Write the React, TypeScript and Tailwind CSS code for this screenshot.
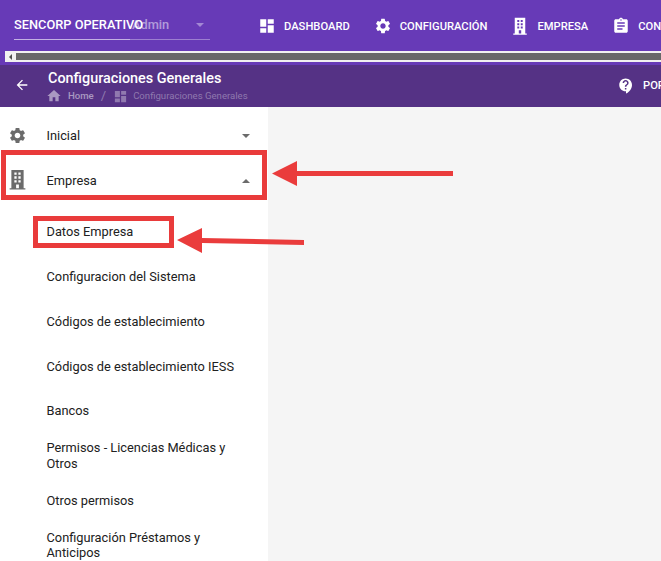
import type { ReactNode } from "react";

const paths = {
  dashboard: "M3 13h8V3H3v10zm0 8h8v-6H3v6zm10 0h8V11h-8v10zm0-18v6h8V3h-8z",
  settings:
    "M19.14 12.94c.04-.3.06-.61.06-.94 0-.32-.02-.64-.07-.94l2.03-1.58a.49.49 0 0 0 .12-.61l-1.92-3.32a.488.488 0 0 0-.59-.22l-2.39.96c-.5-.38-1.03-.7-1.62-.94l-.36-2.54a.484.484 0 0 0-.48-.41h-3.84c-.24 0-.43.17-.47.41l-.36 2.54c-.59.24-1.13.57-1.62.94l-2.39-.96c-.22-.08-.47 0-.59.22L2.74 8.87c-.12.21-.08.47.12.61l2.03 1.58c-.05.3-.09.63-.09.94s.02.64.07.94l-2.03 1.58a.49.49 0 0 0-.12.61l1.92 3.32c.12.22.37.29.59.22l2.39-.96c.5.38 1.03.7 1.62.94l.36 2.54c.05.24.24.41.48.41h3.84c.24 0 .44-.17.47-.41l.36-2.54c.59-.24 1.13-.56 1.62-.94l2.39.96c.22.08.47 0 .59-.22l1.92-3.32c.12-.22.07-.47-.12-.61l-2.01-1.58zM12 15.6c-1.98 0-3.6-1.62-3.6-3.6s1.62-3.6 3.6-3.6 3.6 1.62 3.6 3.6-1.62 3.6-3.6 3.6z",
  // body with base line, two columns of windows and a door
  building:
    "M5 1h14v21h2v1.5H3V22h2V1zM8.4 4v2.6h2.6V4H8.4zm4.6 0v2.6h2.6V4H13zM8.4 8.4V11h2.6V8.4H8.4zm4.6 0V11h2.6V8.4H13zM8.4 12.8v2.6h2.6v-2.6H8.4zm4.6 0v2.6h2.6v-2.6H13zM10.4 17.6V22h3.2v-4.4h-3.2z",
  assignment:
    "M19 3h-4.18C14.4 1.84 13.3 1 12 1c-1.3 0-2.4.84-2.82 2H5c-1.1 0-2 .9-2 2v14c0 1.1.9 2 2 2h14c1.1 0 2-.9 2-2V5c0-1.1-.9-2-2-2zm-7 0c.55 0 1 .45 1 1s-.45 1-1 1-1-.45-1-1 .45-1 1-1zm2 14H7v-2h7v2zm3-4H7v-2h10v2zm0-4H7V7h10v2z",
  home: "M10 20v-6h4v6h5v-8h3L12 3 2 12h3v8z",
  help: "M11.5 2C6.81 2 3 5.81 3 10.5S6.81 19 11.5 19h.5v3c4.86-2.34 8-7 8-11.5C20 5.81 16.19 2 11.5 2zm1 14.5h-2v-2h2v2zm0-3.5h-2c0-3.25 3-3 3-5 0-1.1-.9-2-2-2s-2 .9-2 2h-2c0-2.21 1.79-4 4-4s4 1.79 4 4c0 2.5-3 2.75-3 5z",
  back: "M20 11H7.83l5.59-5.59L12 4l-8 8 8 8 1.41-1.41L7.83 13H20v-2z",
};

const Icon = ({ d, className }: { d: string; className: string }) => (
  <svg viewBox="0 0 24 24" fill="currentColor" fillRule="evenodd" className={className}>
    <path d={d} />
  </svg>
);

const NavItem = ({ icon, label }: { icon: string; label: string }) => (
  <div className="flex items-center shrink-0 gap-[8px] mr-[24px]">
    <Icon d={icon} className="w-[18px] h-[18px] text-white shrink-0" />
    <span className="mt-[2px] text-[11.2px] font-medium text-white whitespace-nowrap">{label}</span>
  </div>
);

const SubItem = ({ children, className = "h-[45px] leading-[16px]" }: { children: ReactNode; className?: string }) => (
  <div className={`flex items-center pl-[46.5px] pr-[30px] text-[12.8px] text-[#212121] ${className}`}>
    <span>{children}</span>
  </div>
);

export default function App() {
  return (
    <div className="relative w-[661px] h-[561px] overflow-hidden bg-[#f5f5f5] font-['Roboto',sans-serif]">
      {/* top bar */}
      <div className="h-[65px] bg-[#673ab7]">
        <div className="flex items-center h-[51px] pl-[14px] pt-[1px]">
          <div className="relative self-start w-[196px] h-[39px] mr-[48px] shrink-0 border-b border-white/35">
            <span className="absolute left-0 top-[16px] text-[12.8px] leading-[16px] font-medium text-white whitespace-nowrap">
              SENCORP OPERATIVO
            </span>
            <span className="absolute left-[118px] top-[16px] text-[12.8px] leading-[16px] font-medium text-white/50">
              Admin
            </span>
            <span className="absolute right-[6px] top-[22px] border-x-[4px] border-t-[4px] border-x-transparent border-t-white/40" />
            <div className="absolute left-0 -bottom-px w-[116px] h-px bg-white/40" />
          </div>
          <NavItem icon={paths.dashboard} label="DASHBOARD" />
          <NavItem icon={paths.settings} label="CONFIGURACIÓN" />
          <NavItem icon={paths.building} label="EMPRESA" />
          <NavItem icon={paths.assignment} label="CONTRATOS" />
        </div>
        {/* horizontal scrollbar */}
        <div className="flex h-[11px] ml-[5px] border-y-2 border-[#f1f1f1]">
          <div className="w-[11px] bg-[#f1f1f1] flex items-center justify-center">
            <span className="border-y-[3px] border-r-[3px] border-y-transparent border-r-[#505050]" />
          </div>
          <div className="flex-1 bg-[#686868]" />
        </div>
      </div>

      {/* page title */}
      <div className="flex items-center h-[42px] bg-[#553285] overflow-hidden">
        <Icon d={paths.back} className="w-[16px] h-[16px] -mt-[2px] ml-[14px] text-white shrink-0" />
        <div className="ml-[18px] flex-1 self-start pt-[6px]">
          <div className="text-[14.4px] leading-[16px] font-medium text-white">Configuraciones Generales</div>
          <div className="flex items-center mt-[1px] text-[9.6px] leading-[12px] text-white/35">
            <Icon d={paths.home} className="w-[16px] h-[16px] -ml-[2px] mr-[6px] text-white/50" />
            <span className="font-medium text-white/50">Home</span>
            <span className="mx-[7px] text-[13px]">/</span>
            <Icon d={paths.dashboard} className="w-[15px] h-[15px] mr-[5px]" />
            <span>Configuraciones Generales</span>
          </div>
        </div>
        <div className="flex items-center shrink-0 gap-[8px] w-[44px]">
          <Icon d={paths.help} className="w-[18px] h-[18px] text-white shrink-0" />
          <span className="text-[11.2px] font-medium text-white">PORTAL</span>
        </div>
      </div>

      {/* sidebar */}
      <div className="w-[268px] h-[454px] bg-white pt-[6px] overflow-hidden">
        <div className="relative flex items-center h-[45px] pl-[46.5px] pr-[18px] text-[12.8px] text-[#212121]">
          <Icon d={paths.settings} className="absolute left-[7.5px] top-[12.5px] w-[19px] h-[19px] text-[#6b6b6b]" />
          <span className="flex-1">Inicial</span>
          <span className="border-x-[4px] border-t-[4px] border-x-transparent border-t-[#6b6b6b]" />
        </div>
        <div className="relative flex items-center h-[45px] pl-[46.5px] pr-[18px] text-[12.8px] text-[#212121]">
          <Icon d={paths.building} className="absolute left-[6.5px] top-[11px] w-[21px] h-[21px] text-[#6b6b6b]" />
          <span className="flex-1">Empresa</span>
          <span className="border-x-[4px] border-b-[4px] border-x-transparent border-b-[#6b6b6b]" />
        </div>
        <div className="h-[6px]" />
        <SubItem>Datos Empresa</SubItem>
        <SubItem>Configuracion del Sistema</SubItem>
        <SubItem>Códigos de establecimiento</SubItem>
        <SubItem>Códigos de establecimiento IESS</SubItem>
        <SubItem className="h-[43px] leading-[16px]">Bancos</SubItem>
        <SubItem className="h-[46px] pt-[1px] leading-[16px]">Permisos - Licencias Médicas y Otros</SubItem>
        <SubItem>Otros permisos</SubItem>
        <SubItem className="h-[44px] leading-[15px]">Configuración Préstamos y Anticipos</SubItem>
      </div>

      {/* annotations */}
      <div className="absolute left-[1px] top-[150px] w-[266px] h-[50px] border-[5px] border-[#e93b3b]" />
      <div className="absolute left-[33px] top-[216px] w-[141px] h-[32px] border-[5px] border-[#e93b3b]" />
      <svg className="absolute left-0 top-0 w-[661px] h-[561px] pointer-events-none" viewBox="0 0 661 561">
        <path d="M272 173.5L297 161v10h156v5H297v10z" fill="#ea3c3c" />
        <path d="M177 240L202 228v10l102 2v5l-102-2v10z" fill="#ea3c3c" />
      </svg>
    </div>
  );
}
